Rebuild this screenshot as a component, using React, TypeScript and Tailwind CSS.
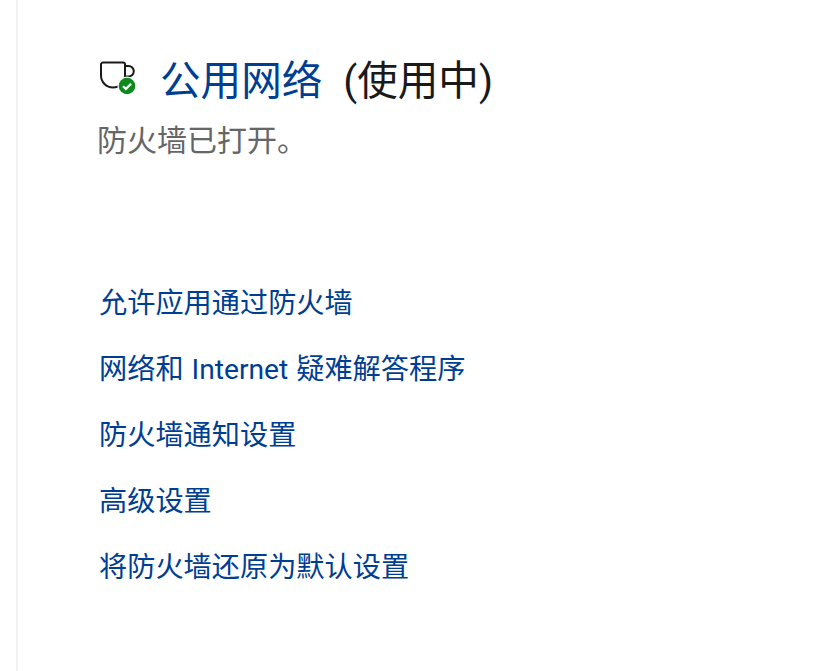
const font = { fontFamily: '"Roboto", "Noto Sans CJK SC", sans-serif' };
const links = ["允许应用通过防火墙", "网络和 Internet 疑难解答程序", "防火墙通知设置", "高级设置", "将防火墙还原为默认设置"];

export default function App() {
  return (
    <div className="h-[671px] w-[819px] overflow-hidden bg-white" style={font}>
      <div className="ml-4 h-full border-l-2 border-[#f0f0f0] pl-[80px] pt-[52px]">
        <div className="-mt-[2px] flex h-[58px] items-center">
          <svg width="38" height="38" viewBox="0 0 38 38" fill="none" className="ml-[1px] mr-[23px] shrink-0">
            <path d="M2 4.5a2 2 0 0 1 2-2h20a2 2 0 0 1 2 2v11a12 12 0 0 1-12 12a12 12 0 0 1-12-12z" stroke="#1a1a1a" strokeWidth="2" />
            <path d="M26 6h3.5a5 5 0 0 1 0 10.5h-3.5" stroke="#1a1a1a" strokeWidth="2" />
            <circle cx="28" cy="26" r="9.5" fill="#fff" />
            <circle cx="28" cy="26" r="8.3" fill="#0c8a1c" />
            <path d="M24 26.2l2.9 2.7 5.2-5.2" stroke="#fff" strokeWidth="2.2" />
          </svg>
          <span className="mt-[4px] text-[40.6px] leading-none text-[#003e92]">公用网络</span>
          <span className="ml-[21px] mt-[4px] text-[40.6px] leading-none text-[#1a1a1a]">(使用中)</span>
        </div>
        <div className="-ml-[1px] mt-[13px] text-[30px] leading-[40px] text-[#666]">防火墙已打开。</div>
        <div className="mt-[123px] flex flex-col gap-[26px]">
          {links.map((l) => (
            <div key={l} className="ml-[1px] h-[40px] text-[28.2px] leading-[40px] text-[#003e92] [word-spacing:1px]">{l}</div>
          ))}
        </div>
      </div>
    </div>
  );
}
